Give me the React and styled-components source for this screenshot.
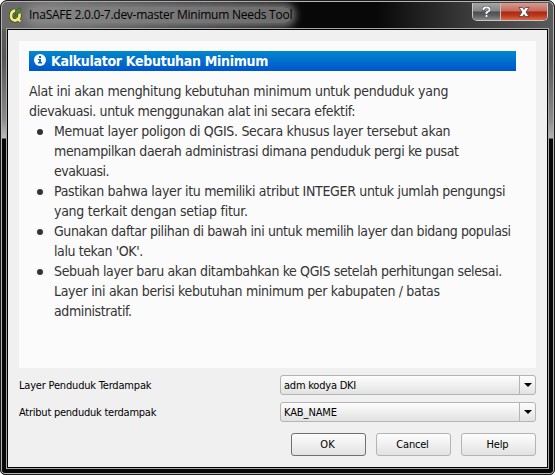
import React from "react";
import styled, { createGlobalStyle } from "styled-components";

const Global = createGlobalStyle`
  * { box-sizing: border-box; }
  body { margin: 0; background: #fff; }
`;

const Frame = styled.div`
  width: 555px;
  height: 475px;
  display: flex;
  flex-direction: column;
  padding: 2px 6px 6px 6px;
  border: 1px solid #1c1c1c;
  border-radius: 7px 7px 5px 5px;
  box-shadow: inset 0 0 0 1px #b4b4b4;
  background:
    linear-gradient(90deg, #6b6b6b 0, #6b6b6b 10%, rgba(60, 60, 60, 0) 55%, rgba(60, 60, 60, 0) 68%, #3c3c3c 85%, #5a5a5a 100%) 0 0 / 100% 28px no-repeat,
    linear-gradient(180deg, #5c5c5c 0, #555 28px, #8a8a8a 90px, #bdbdbd 109px, #080808 110px) 0 28px / 9px 111px no-repeat,
    linear-gradient(180deg, #5c5c5c 0, #555 28px, #8a8a8a 90px, #b5b5b5 109px, #080808 110px) 100% 28px / 9px 111px no-repeat,
    #080808;
  font-family: "DejaVu Sans Condensed", "DejaVu Sans", sans-serif;
  font-stretch: condensed;
`;

const TitleBar = styled.header`
  height: 26px;
  flex: none;
  display: flex;
  align-items: flex-start;
`;

const AppIcon = styled.svg`
  flex: none;
  width: 16px;
  height: 16px;
  margin: 4px 0 0 1px;
`;

const Text = styled.span`
  white-space: pre;
  letter-spacing: ${(p) => p.$track || 0}px;
`;

const Caption = styled.div`
  margin: 4px 0 0 5px;
  height: 16px;
  line-height: 16px;
  font-family: "Open Sans", sans-serif;
  font-stretch: normal;
  font-size: 12px;
  color: #000;
  background: rgba(140, 140, 140, 0.75);
  box-shadow: 0 0 7px 4px rgba(140, 140, 140, 0.75);
  border-radius: 8px;
`;

const WindowButtons = styled.div`
  margin-left: auto;
  display: flex;
  height: 18px;
  border: 1px solid #c8c8c8;
  border-top: 0;
  border-radius: 0 0 5px 5px;
  overflow: hidden;
`;

const WindowButton = styled.button`
  width: ${(p) => p.$width}px;
  padding: 0;
  border: 0;
  border-left: ${(p) => (p.$close ? "1px solid #d0b8b4" : "0")};
  display: flex;
  align-items: center;
  justify-content: center;
  background: ${(p) =>
    p.$close
      ? "linear-gradient(#d99a90 0, #c4685a 48%, #a92710 52%, #bd3a20 75%, #d8694c 100%)"
      : "linear-gradient(#a5a5a5 0, #858585 48%, #4c4c4c 52%, #606060 75%, #8a8a8a 100%)"};
`;

const Client = styled.main`
  flex: 1;
  display: flex;
  flex-direction: column;
  padding: 11px 11px 0;
  border: 1px solid #000;
  outline: 1px solid #a8a8a8;
  background: #f0f0f0;
`;

const Help = styled.section`
  height: 327px;
  flex: none;
  padding: 10px 10px 0;
  background: #fbfbfb;
  color: #333;
`;

const Heading = styled.h1`
  margin: 0 10px 0 0;
  height: 20px;
  display: flex;
  align-items: center;
  gap: 5px;
  padding-left: 5px;
  background: linear-gradient(#0088cc, #0055cc);
  color: #fff;
  font-size: 14px;
  line-height: 20px;
  font-weight: bold;
`;

const HeadingIcon = styled.svg`
  flex: none;
  margin-top: -2px;
`;

const Copy = styled.div`
  padding-top: 10px;
  font-size: 14px;
  line-height: 20px;
`;

const Line = styled.div`
  height: 20px;
`;

const Bullets = styled.ul`
  list-style: none;
  margin: 0;
  padding: 0;
`;

const Bullet = styled.li`
  display: grid;
  grid-template-columns: 25px 1fr;

  &::before {
    content: "";
    width: 6px;
    height: 6px;
    margin: 8px 0 0 8px;
    border-radius: 50%;
    background: #333;
  }
`;

const Field = styled.label`
  display: grid;
  grid-template-columns: 261px 1fr;
  align-items: center;
  height: 20px;
  margin-top: 7px;
  font-size: 11px;
  color: #000;
`;

const Combo = styled.div`
  height: 20px;
  display: flex;
  align-items: center;
  padding-left: 3px;
  border: 1px solid #b4b4b4;
  border-radius: 3px;
  background: linear-gradient(#fdfdfd, #e2e2e2);
`;

const ComboArrow = styled.span`
  margin-left: auto;
  width: 16px;
  height: 18px;
  border-left: 1px solid #b4b4b4;
  display: flex;
  align-items: center;
  justify-content: center;
`;

const Actions = styled.footer`
  display: flex;
  justify-content: flex-end;
  gap: 10px;
  margin-top: 11px;
`;

const Button = styled.button`
  width: 75px;
  height: 23px;
  padding: 0 2px 0 0;
  border: 1px solid ${(p) => (p.$primary ? "#707070" : "#b4b4b4")};
  border-radius: 3px;
  background: linear-gradient(#fdfdfd, #e2e2e2);
  color: #000;
  font: inherit;
  font-size: 11px;
`;

const intro = [
  ["Alat ini akan menghitung kebutuhan minimum untuk penduduk yang", -0.27],
  ["dievakuasi. untuk menggunakan alat ini secara efektif:", -0.37],
];

const steps = [
  [
    ["Memuat layer poligon di QGIS. Secara khusus layer tersebut akan", -0.3],
    ["menampilkan daerah administrasi dimana penduduk pergi ke pusat", -0.37],
    ["evakuasi.", -0.5],
  ],
  [
    ["Pastikan bahwa layer itu memiliki atribut INTEGER untuk jumlah pengungsi", -0.32],
    ["yang terkait dengan setiap fitur.", -0.28],
  ],
  [
    ["Gunakan daftar pilihan di bawah ini untuk memilih layer dan bidang populasi", -0.4],
    ["lalu tekan 'OK'.", -0.4],
  ],
  [
    ["Sebuah layer baru akan ditambahkan ke QGIS setelah perhitungan selesai.", -0.36],
    ["Layer ini akan berisi kebutuhan minimum per kabupaten / batas", -0.32],
    ["administratif.", -0.4],
  ],
];

const Lines = ({ items }) =>
  items.map(([text, track]) => (
    <Line key={text}>
      <Text $track={track}>{text}</Text>
    </Line>
  ));

const Select = ({ label, labelTrack, value, valueTrack }) => (
  <Field>
    <Text $track={labelTrack}>{label}</Text>
    <Combo>
      <Text $track={valueTrack}>{value}</Text>
      <ComboArrow>
        <svg width="8" height="4" viewBox="0 0 8 4">
          <path d="M0 0h8L4 4z" fill="#000" />
        </svg>
      </ComboArrow>
    </Combo>
  </Field>
);

export default function App() {
  return (
    <>
      <Global />
      <Frame>
        <TitleBar>
          <AppIcon viewBox="0 0 16 16">
            <path d="M7 3.500C4 4 3 6.500 3 9s1.500 4.500 4 4.500c3.500 0 5-3 4.500-7" fill="none" stroke="#2f3a1c" strokeWidth="4" />
            <path d="M9 11l3 3" stroke="#2f3a1c" strokeWidth="3.500" />
            <path d="M7 3.500C4 4 3 6.500 3 9s1.500 4.500 4 4.500c3.500 0 5-3 4.500-7" fill="none" stroke="#eff06c" strokeWidth="2.800" />
            <path d="M9 11l3.300 3.300" stroke="#eff06c" strokeWidth="2.400" />
            <path d="M7.500 6.500C7.500 3.500 9.500 1.500 13 1c0 3-1.500 4.800-4 5.300L6.500 10z" fill="#4f9420" stroke="#24400f" strokeWidth=".4" />
          </AppIcon>
          <Caption>
            <Text $track={-0.25}>InaSAFE 2.0.0-7.dev-master Minimum Needs Tool</Text>
          </Caption>
          <WindowButtons>
            <WindowButton $width={27} aria-label="Help">
              <svg width="9" height="12" viewBox="0 0 9 12" fill="none">
                <path d="M1.500 4.500V2.500L3 1.500h3l1.500 1v2L4.500 6.500V8M4.500 9v2" stroke="#333b50" strokeWidth="3" />
                <path d="M1.500 4V2.500L3 1.500h3l1.500 1v2L4.500 6.500V8M4.500 9v2" stroke="#fff" strokeWidth="1.900" />
              </svg>
            </WindowButton>
            <WindowButton $width={47} $close aria-label="Close">
              <svg width="12" height="10" viewBox="0 0 12 10">
                <path d="M1 .5h3.500L6 2.500 7.500.5H11L8 5l3 4.500H7.500L6 7.500l-1.500 2H1L4 5z" fill="#fff" stroke="#4b3a48" strokeWidth=".8" />
              </svg>
            </WindowButton>
          </WindowButtons>
        </TitleBar>
        <Client>
          <Help>
            <Heading>
              <HeadingIcon width="12" height="12" viewBox="0 0 12 12">
                <circle cx="6" cy="6" r="6" fill="#fff" />
                <path d="M5 2h2v2H5zM4 5h3v3h1v1.500H4V8h1V6H4z" fill="#006fcc" />
              </HeadingIcon>
              <Text $track={-0.29}>Kalkulator Kebutuhan Minimum</Text>
            </Heading>
            <Copy>
              <Lines items={intro} />
              <Bullets>
                {steps.map((step) => (
                  <Bullet key={step[0][0]}>
                    <div>
                      <Lines items={step} />
                    </div>
                  </Bullet>
                ))}
              </Bullets>
            </Copy>
          </Help>
          <Select label="Layer Penduduk Terdampak" labelTrack={-0.19} value="adm kodya DKI" valueTrack={-0.22} />
          <Select label="Atribut penduduk terdampak" labelTrack={-0.24} value="KAB_NAME" valueTrack={-0.1} />
          <Actions>
            <Button $primary>OK</Button>
            <Button>
              <Text $track={-0.2}>Cancel</Text>
            </Button>
            <Button>
              <Text $track={-0.2}>Help</Text>
            </Button>
          </Actions>
        </Client>
      </Frame>
    </>
  );
}
